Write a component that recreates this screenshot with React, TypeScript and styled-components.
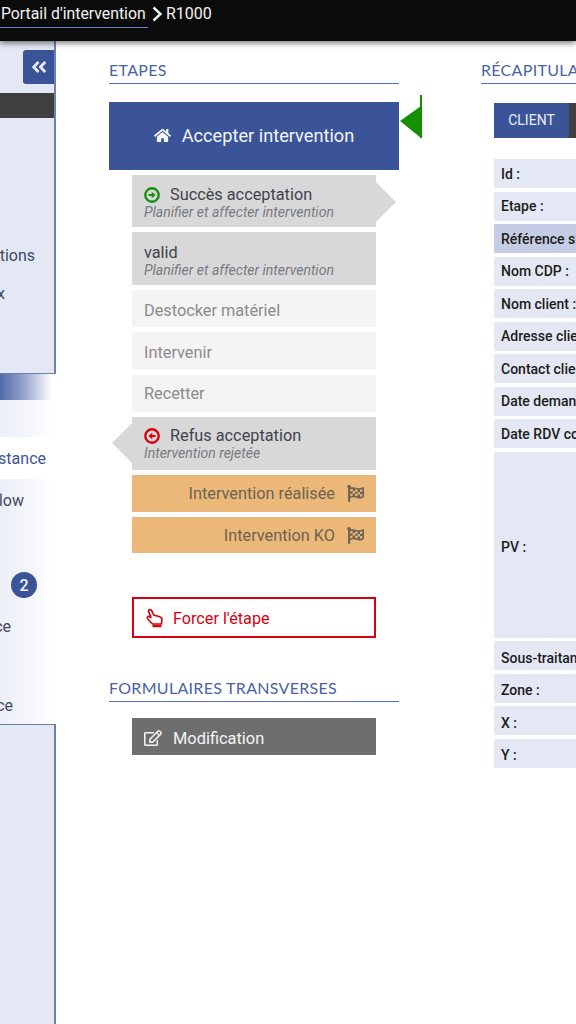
import React from "react";
import styled, { createGlobalStyle } from "styled-components";
import {
  FaAngleDoubleLeft,
  FaFlagCheckered,
  FaHome,
  FaRegEdit,
} from "react-icons/fa";

const GlobalStyle = createGlobalStyle`
  html, body {
    margin: 0;
    padding: 0;
    width: 576px;
    height: 1024px;
    overflow: hidden;
    background: #ffffff;
    font-family: Roboto, "Liberation Sans", sans-serif;
  }
`;

const Page = styled.div`
  width: 576px;
  height: 1024px;
  overflow: hidden;
  display: flex;
  flex-direction: column;
`;

const TopBar = styled.header`
  position: relative;
  z-index: 2;
  flex: 0 0 41px;
  background: #0b0b0b;
  box-shadow: 0 2px 6px rgba(0, 0, 0, 0.55);
  display: flex;
  align-items: flex-start;
  color: #f2f2f2;
  font-size: 16px;
`;

const Crumb = styled.div`
  width: 147px;
  height: 27px;
  line-height: 27px;
  padding-left: 1px;
  font-size: 15.8px;
  border-bottom: 1px solid #6b80b8;
  white-space: nowrap;
  overflow: hidden;
`;

const Chevron = styled.svg`
  width: 12px;
  height: 16px;
  margin: 6px 3px 0 3px;
`;

const CrumbCurrent = styled.div`
  line-height: 27px;
`;

const Body = styled.div`
  flex: 1;
  display: flex;
  min-height: 0;
`;

const Sidebar = styled.aside`
  flex: 0 0 56px;
  display: flex;
  flex-direction: column;
  overflow: hidden;
  font-size: 16px;
  color: #3f4a63;
`;

const SideTop = styled.div`
  box-sizing: border-box;
  height: 333px;
  background: #e4e8f5;
  border-right: 2px solid #6b80b8;
  border-bottom: 1px solid #6b80b8;
  padding-top: 9px;
  display: flex;
  flex-direction: column;
`;

const Collapse = styled.div`
  align-self: flex-end;
  width: 31px;
  height: 34px;
  background: #3b5498;
  border-radius: 3px 0 0 3px;
  color: #e8ecf8;
  display: flex;
  align-items: center;
  justify-content: center;
  font-size: 18px;
`;

const DarkBar = styled.div`
  height: 25px;
  margin-top: 9px;
  background: #3f3f3f;
`;

const SideItem = styled.div<{ $end: number; $active?: boolean; $height: number; $accent?: boolean }>`
  flex: none;
  height: ${(p) => p.$height}px;
  padding-right: ${(p) => p.$end}px;
  display: flex;
  align-items: center;
  justify-content: flex-end;
  white-space: nowrap;
  background: ${(p) => (p.$active ? "#ffffff" : "transparent")};
  color: ${(p) => (p.$accent ? "#3b5498" : "inherit")};
`;

const TopList = styled.div`
  margin-top: 118px;
  display: flex;
  flex-direction: column;
`;

const GradientBar = styled.div`
  flex: 0 0 26px;
  background: linear-gradient(to right, #5268a8 0%, #9aa8cf 45%, #ffffff 92%);
`;

const SideLower = styled.div`
  flex: 0 0 324px;
  background: linear-gradient(to right, #eceff8 0%, #f6f7fc 60%, #ffffff 92%);
  padding-top: 37px;
  box-sizing: border-box;
  display: flex;
  flex-direction: column;
`;

const Badge = styled.span`
  width: 26px;
  height: 26px;
  border-radius: 50%;
  background: #3b5498;
  color: #f4f6fb;
  font-size: 16px;
  font-weight: 500;
  display: flex;
  align-items: center;
  justify-content: center;
`;

const SideBottom = styled.div`
  flex: 1;
  background: #e4e8f5;
  border-top: 1px solid #6b80b8;
  border-right: 2px solid #6b80b8;
`;

const Columns = styled.main`
  flex: none;
  display: flex;
  gap: 82px;
  padding: 19px 0 0 53px;
`;

const StepsColumn = styled.section`
  flex: 0 0 290px;
  display: flex;
  flex-direction: column;
`;

const RecapColumn = styled.section`
  flex: 0 0 400px;
  display: flex;
  flex-direction: column;
`;

const Heading = styled.h2<{ $gap?: number }>`
  margin: ${(p) => p.$gap ?? 0}px 0 0;
  height: 23px;
  line-height: 20px;
  font-family: Lato, "Open Sans", sans-serif;
  font-weight: 400;
  font-size: 16px;
  letter-spacing: 0.3px;
  color: #4a62a8;
  white-space: nowrap;
  border-bottom: 1px solid #5a71b0;
`;

const MainStep = styled.div`
  position: relative;
  margin-top: 18px;
  box-sizing: border-box;
  height: 68px;
  padding-bottom: 1px;
  background: #3b5498;
  color: #f2f4fa;
  font-size: 18.2px;
  display: flex;
  align-items: center;
  justify-content: center;
  gap: 11px;
`;

const Flag = styled.svg`
  position: absolute;
  left: 290px;
  top: -7px;
  width: 24px;
  height: 44px;
`;

const StepList = styled.div`
  margin: 5px 23px 0;
  display: flex;
  flex-direction: column;
  gap: 5px;
`;

const Step = styled.div<{
  $tone: "done" | "todo" | "end";
  $height: number;
  $arrow?: "left" | "right";
  $top?: number;
}>`
  position: relative;
  box-sizing: border-box;
  height: ${(p) => p.$height}px;
  padding: ${(p) => p.$top ?? 3}px 12px 0;
  display: flex;
  flex-direction: column;
  justify-content: center;
  font-size: 16.3px;
  background: ${(p) =>
    p.$tone === "done" ? "#d8d8d8" : p.$tone === "todo" ? "#f4f4f4" : "#ecb87a"};
  color: ${(p) => (p.$tone === "done" ? "#3f434c" : p.$tone === "todo" ? "#8b8b8b" : "#6e6250")};
  ${(p) =>
    p.$arrow === "right" &&
    `&::after {
      content: "";
      position: absolute;
      left: 100%;
      top: 7px;
      border-left: 20px solid #d8d8d8;
      border-top: 20px solid transparent;
      border-bottom: 20px solid transparent;
    }`}
  ${(p) =>
    p.$arrow === "left" &&
    `&::after {
      content: "";
      position: absolute;
      right: 100%;
      top: 6px;
      border-right: 20px solid #d8d8d8;
      border-top: 20px solid transparent;
      border-bottom: 20px solid transparent;
    }`}
`;

const StepTitle = styled.div`
  display: flex;
  align-items: center;
  gap: 10px;
  line-height: 18px;
`;

const StepHint = styled.div`
  font-size: 14px;
  font-style: italic;
  line-height: 16px;
  color: #777a80;
`;

const Outcome = styled.div`
  display: flex;
  align-items: center;
  justify-content: flex-end;
  gap: 12px;
`;

const RingIcon = styled.svg`
  width: 16px;
  height: 16px;
  flex: none;
`;

const HandIcon = styled.svg`
  width: 18px;
  height: 20px;
  flex: none;
`;

const ForceButton = styled.div`
  box-sizing: border-box;
  margin: 44px 23px 0;
  height: 41px;
  padding: 1px 0 0 12px;
  border: 2px solid #d7000f;
  color: #d7000f;
  font-size: 16.2px;
  display: flex;
  align-items: center;
  gap: 9px;
`;

const ModifButton = styled.div`
  box-sizing: border-box;
  margin: 16px 23px 0;
  height: 37px;
  padding: 3px 0 0 12px;
  background: #6e6e6e;
  color: #f4f4f4;
  font-size: 16.4px;
  display: flex;
  align-items: center;
  gap: 11px;
`;

const Tabs = styled.div`
  margin: 19px 0 0 13px;
  height: 35px;
  display: flex;
`;

const Tab = styled.div<{ $active?: boolean }>`
  flex: ${(p) => (p.$active ? "0 0 75px" : "1")};
  box-sizing: border-box;
  padding-bottom: 2px;
  background: ${(p) => (p.$active ? "#3b5498" : "#3f3f3f")};
  color: #e8ecf8;
  font-size: 14px;
  display: flex;
  align-items: center;
  justify-content: center;
`;

const Rows = styled.div`
  margin: 21px 0 0 13px;
  display: flex;
  flex-direction: column;
  gap: 3.5px;
`;

const Row = styled.div<{ $height?: number; $active?: boolean; $low?: boolean }>`
  box-sizing: border-box;
  height: ${(p) => p.$height ?? 29}px;
  padding: ${(p) => (p.$low ? 4 : 0)}px 0 0 7px;
  display: flex;
  align-items: center;
  white-space: nowrap;
  font-size: 14px;
  font-weight: 500;
  color: #1c1c1c;
  background: ${(p) => (p.$active ? "#c5cde6" : "#e4e8f5")};
`;

const rows: { label: string; height?: number; active?: boolean; low?: boolean }[] = [
  { label: "Id :" },
  { label: "Etape :" },
  { label: "Référence site :", active: true },
  { label: "Nom CDP :" },
  { label: "Nom client :" },
  { label: "Adresse client :" },
  { label: "Contact client :" },
  { label: "Date demande :" },
  { label: "Date RDV confirmé :" },
  { label: "PV :", height: 186, low: true },
  { label: "Sous-traitant :", low: true },
  { label: "Zone :", low: true },
  { label: "X :", low: true },
  { label: "Y :", low: true },
];

function CircleArrow({ color, dir }: { color: string; dir: "left" | "right" }) {
  return (
    <RingIcon viewBox="0 0 16 16">
      <circle cx="8" cy="8" r="6.7" fill="none" stroke={color} strokeWidth="2.4" />
      <path
        d={
          dir === "right"
            ? "M4.5 7h3.2V4.8L11.6 8 7.7 11.2V9H4.5z"
            : "M11.5 7H8.3V4.8L4.4 8l3.9 3.2V9h3.2z"
        }
        fill={color}
      />
    </RingIcon>
  );
}

export default function App() {
  return (
    <Page>
      <GlobalStyle />
      <TopBar>
        <Crumb>Portail d'intervention</Crumb>
        <Chevron viewBox="0 0 12 16">
          <path d="M2.5 1.5 9.5 8l-7 6.5" fill="none" stroke="#f2f2f2" strokeWidth="2.4" />
        </Chevron>
        <CrumbCurrent>R1000</CrumbCurrent>
      </TopBar>
      <Body>
        <Sidebar>
          <SideTop>
            <Collapse>
              <FaAngleDoubleLeft />
            </Collapse>
            <DarkBar />
            <TopList>
              <SideItem $height={38} $end={19}>Notifications</SideItem>
              <SideItem $height={38} $end={49}>Box</SideItem>
            </TopList>
          </SideTop>
          <GradientBar />
          <SideLower>
            <SideItem $height={42} $end={10} $active $accent>Assistance</SideItem>
            <SideItem $height={42} $end={32}>Workflow</SideItem>
            <SideItem $height={42} $end={0} />
            <SideItem $height={44} $end={19}>
              <Badge>2</Badge>
            </SideItem>
            <SideItem $height={39} $end={45}>Maintenance</SideItem>
            <SideItem $height={41} $end={0} />
            <SideItem $height={37} $end={43}>Conformance</SideItem>
          </SideLower>
          <SideBottom />
        </Sidebar>
        <Columns>
          <StepsColumn>
            <Heading>ETAPES</Heading>
            <MainStep>
              <FaHome size={17} />
              Accepter intervention
              <Flag viewBox="0 0 24 44">
                <path d="M1 26 22 11V43z" fill="#159000" />
                <rect x="21" y="0" width="2" height="43" fill="#159000" />
              </Flag>
            </MainStep>
            <StepList>
              <Step $tone="done" $height={52} $arrow="right">
                <StepTitle>
                  <CircleArrow color="#14900f" dir="right" />
                  Succès acceptation
                </StepTitle>
                <StepHint>Planifier et affecter intervention</StepHint>
              </Step>
              <Step $tone="done" $height={53} $top={4}>
                <StepTitle>valid</StepTitle>
                <StepHint>Planifier et affecter intervention</StepHint>
              </Step>
              <Step $tone="todo" $height={37}>Destocker matériel</Step>
              <Step $tone="todo" $height={38}>Intervenir</Step>
              <Step $tone="todo" $height={37} $top={0}>Recetter</Step>
              <Step $tone="done" $height={53} $arrow="left" $top={1}>
                <StepTitle>
                  <CircleArrow color="#d7000f" dir="left" />
                  Refus acceptation
                </StepTitle>
                <StepHint>Intervention rejetée</StepHint>
              </Step>
              <Step $tone="end" $height={36.5} $top={1}>
                <Outcome>
                  Intervention réalisée
                  <FaFlagCheckered size={17} />
                </Outcome>
              </Step>
              <Step $tone="end" $height={36.5} $top={1}>
                <Outcome>
                  Intervention KO
                  <FaFlagCheckered size={17} />
                </Outcome>
              </Step>
            </StepList>
            <ForceButton>
              <HandIcon viewBox="0 0 18 20">
                <path
                  d="M2.6 2.4c.6-1 2-1.2 2.7-.2l2.7 5 5.1 1.4c1.6.5 3 1.4 2.9 3l-.6 4.4H6.5L1.6 10.8c-.8-1-.2-2.4 1-2.4l2.4 1.2L2.6 3.4z"
                  fill="none"
                  stroke="#d7000f"
                  strokeWidth="1.6"
                  strokeLinejoin="round"
                />
                <path d="M6.5 16.8h9v2.4h-9z" fill="#d7000f" />
              </HandIcon>
              Forcer l'étape
            </ForceButton>
            <Heading $gap={40}>FORMULAIRES TRANSVERSES</Heading>
            <ModifButton>
              <FaRegEdit size={18} />
              Modification
            </ModifButton>
          </StepsColumn>
          <RecapColumn>
            <Heading>RÉCAPITULATIF</Heading>
            <Tabs>
              <Tab $active>CLIENT</Tab>
              <Tab>INTERVENTION</Tab>
            </Tabs>
            <Rows>
              {rows.map((row) => (
                <Row key={row.label} $height={row.height} $active={row.active} $low={row.low}>
                  {row.label}
                </Row>
              ))}
            </Rows>
          </RecapColumn>
        </Columns>
      </Body>
    </Page>
  );
}
